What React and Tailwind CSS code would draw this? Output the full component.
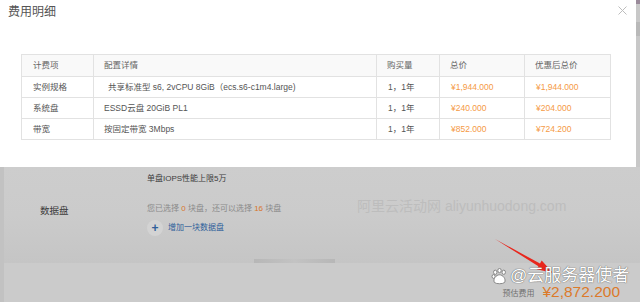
const rows = [
  { item: '实例规格', detail: '共享标准型 s6, 2vCPU 8GiB（ecs.s6-c1m4.large)', indent: true, qty: '1，1年', total: '¥1,944.000', final: '¥1,944.000' },
  { item: '系统盘', detail: 'ESSD云盘 20GiB PL1', qty: '1，1年', total: '¥240.000', final: '¥204.000' },
  { item: '带宽', detail: '按固定带宽 3Mbps', qty: '1，1年', total: '¥852.000', final: '¥724.200' },
]

const cell = 'border border-[#e2e2e2] align-middle'

export default function App() {
  return (
    <div
      className="relative w-[640px] h-[302px] overflow-hidden bg-[#cbcbcb]"
      style={{ fontFamily: '"Liberation Sans", "Noto Sans CJK SC", sans-serif' }}
    >
      {/* modal */}
      <div className="flex h-[167px]">
        <div className="relative w-[636px] bg-white">
          <div className="pl-[8px] pt-[5px] text-[12px] leading-[14px] text-[#555]">费用明细</div>
          <svg className="absolute left-[618px] top-[6px] w-[9px] h-[9px]" viewBox="0 0 9 9" stroke="#bdbdbd" strokeWidth="1">
            <path d="M0.5 0.5 L8.5 8.5 M8.5 0.5 L0.5 8.5" />
          </svg>

          <table className="ml-[21px] mt-[35px] border-collapse text-[8.5px] text-[#555]">
            <thead>
              <tr className="h-[22px] bg-[#f9f9f9] text-[#666]">
                <td className={`${cell} w-[72px] pl-[11px]`}>计费项</td>
                <td className={`${cell} w-[283px] pl-[10px]`}>配置详情</td>
                <td className={`${cell} w-[63px] pl-[10px]`}>购买量</td>
                <td className={`${cell} w-[85px] pl-[10px]`}>总价</td>
                <td className={`${cell} w-[86px] pl-[10px]`}>优惠后总价</td>
              </tr>
            </thead>
            <tbody>
              {rows.map((r) => (
                <tr key={r.item} className="h-[21px]">
                  <td className={`${cell} pl-[11px]`}>{r.item}</td>
                  <td className={`${cell} ${r.indent ? 'pl-[14px]' : 'pl-[10px]'}`}>{r.detail}</td>
                  <td className={`${cell} pl-[11px]`}>{r.qty}</td>
                  <td className={`${cell} pl-[11px] text-[#f59a45]`}>{r.total}</td>
                  <td className={`${cell} pl-[11px] text-[#f59a45]`}>{r.final}</td>
                </tr>
              ))}
            </tbody>
          </table>
        </div>
        <div className="flex-1 flex flex-col bg-[#c8c8c8]">
          <div className="h-[4px] bg-[#9a8a9a]" />
          <div className="mt-[18px] h-[14px] bg-[#b9b9b9]" />
        </div>
      </div>

      {/* page beneath the overlay */}
      <div className="relative flex flex-col h-[96px] border-l-4 border-[#c2c2c2] bg-gradient-to-b from-[#cdcdcd] via-[#cbcbcb] to-[#c5c5c5]">
        <div className="pl-[143px] pt-[6px] text-[8px] leading-[12px] text-[#3c3c3c]">单盘IOPS性能上限5万</div>
        <div className="flex">
          <div className="w-[143px] pl-[36px] pt-[20px] text-[9.5px] leading-[12px] text-[#3c3c3c]">数据盘</div>
          <div className="flex flex-col pt-[18px]">
            <div className="text-[8px] leading-[12px] text-[#8a8a8a] whitespace-pre">
              您已选择 <span className="text-[#d8762c]">0</span> 块盘，还可以选择 <span className="text-[#d8762c]">16</span> 块盘
            </div>
            <div className="mt-[5px] flex items-center gap-[5px]">
              <div className="w-[16px] h-[16px] rounded-full bg-[#d3d3d3] flex items-center justify-center text-[#2f5f9a] text-[12px] leading-none font-bold">+</div>
              <span className="text-[8px] leading-[12px] text-[#2f5f9a]">增加一块数据盘</span>
            </div>
          </div>
        </div>
        <div className="mt-auto ml-[250px] w-[81px] h-[4px] bg-gradient-to-r from-[#b7b7b7] via-[#c3c3c3] to-[#b7b7b7]" />

        <div className="absolute left-[353px] top-[30px] text-[14px] leading-[18px] text-[#bdbdbd] whitespace-pre">
          阿里云活动网 aliyunhuodong.com
        </div>
      </div>

      {/* bottom bar */}
      <div className="h-[39px] flex justify-end items-end gap-[8px] pr-[20px] pb-[1px] border-l-4 border-[#c2c2c2] bg-[#cbcbcb]">
        <span className="text-[8px] leading-[12px] mb-[1px] text-[#707070]">预估费用</span>
        <span className="text-[15.5px] leading-[18px] text-[#dc7a2a]">¥2,872.200</span>
      </div>

      {/* red arrow annotation */}
      <svg className="absolute left-0 top-0 w-[640px] h-[302px] pointer-events-none" viewBox="0 0 640 302">
        <polygon points="495,239 540,263.6 541.7,260.6 553,273 536.7,269.2 538.4,266.2" fill="#e8261c" />
      </svg>

      {/* author watermark */}
      <div
        className="absolute left-[491px] top-[266px] flex items-center gap-[2px] text-[17px] leading-[20px] text-white"
        style={{ textShadow: '0 0 1px #666, 0 0 1px #666' }}
      >
        <svg className="w-[17px] h-[17px]" viewBox="0 0 20 20" fill="#fff" stroke="#777" strokeWidth="1">
          <ellipse cx="5" cy="5" rx="2" ry="2.5" />
          <ellipse cx="10" cy="3" rx="2" ry="2.5" />
          <ellipse cx="15" cy="5" rx="2" ry="2.5" />
          <ellipse cx="3" cy="10" rx="1.8" ry="2.2" />
          <path d="M10 8 C14 8 18 13 16 17 C14 19 6 19 4 17 C2 13 6 8 10 8 Z" />
        </svg>
        <span>@云服务器使者</span>
      </div>
    </div>
  )
}
